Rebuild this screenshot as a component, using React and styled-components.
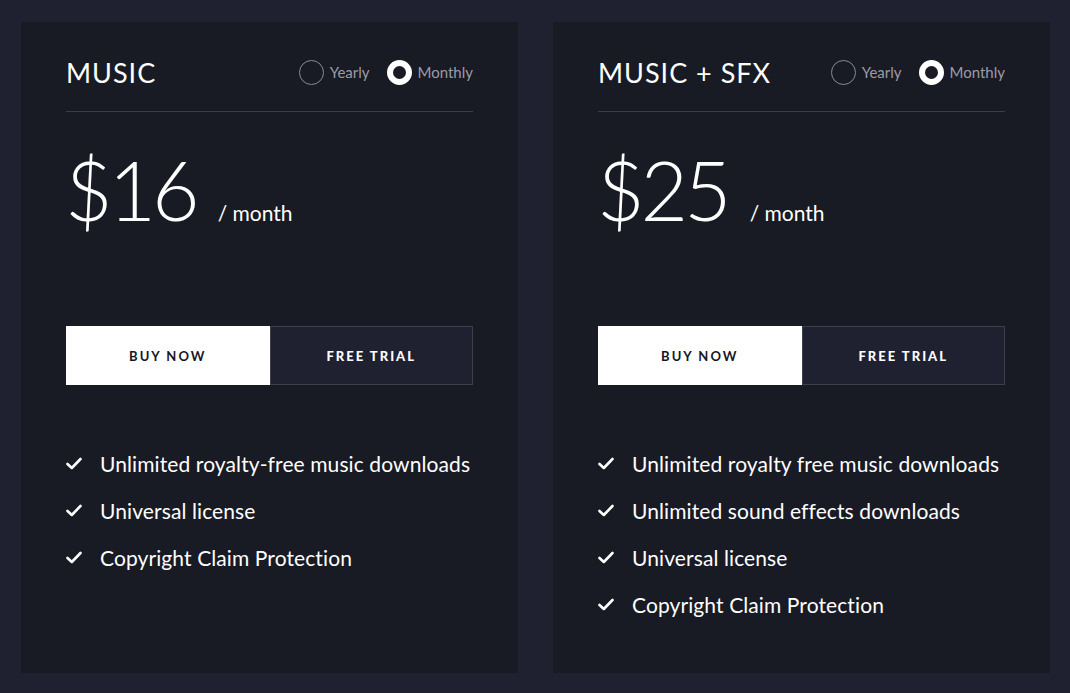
import React from "react";
import styled, { createGlobalStyle } from "styled-components";

const Global = createGlobalStyle`
  html, body { margin: 0; padding: 0; background: #1f2030; }
  body { font-family: "Lato", "Noto Sans", sans-serif; color: #fff; }
  * { box-sizing: border-box; }
`;

const Page = styled.div`
  width: 1070px;
  height: 693px;
  padding: 22px 20px 20px 21px;
  display: grid;
  grid-template-columns: 497px 497px;
  column-gap: 35px;
  background: #1f2030;
`;

const Card = styled.div`
  background: #181a24;
  padding: 0 45px;
  display: flex;
  flex-direction: column;
  height: 651px;
`;

const Header = styled.div`
  display: flex;
  align-items: center;
  justify-content: space-between;
  height: 90px;
  padding-top: 11px;
  border-bottom: 1px solid #3b3d4a;
`;

const Title = styled.h2`
  margin: 0;
  font-weight: 400;
  font-size: 27px;
  letter-spacing: 1px;
  color: #fff;
`;

const Toggle = styled.div`
  display: flex;
  align-items: center;
  gap: 17px;
`;

const Option = styled.label`
  display: flex;
  align-items: center;
  gap: 6px;
  font-size: 15px;
  color: #9c9ca8;
  font-weight: 400;
`;

const Dot = styled.span`
  width: 25px;
  height: 25px;
  border-radius: 50%;
  border: ${(p) => (p.$on ? "6px solid #fff" : "1px solid #8a8b95")};
  background: #181a24;
`;

const PriceRow = styled.div`
  display: flex;
  align-items: baseline;
  margin-top: 36px;
  height: 100px;
`;

const Amount = styled.span`
  font-size: 82px;
  font-weight: 300;
  line-height: 1;
  letter-spacing: -4px;
  color: #fff;
  margin-left: -1px;
`;

const Per = styled.span`
  font-size: 21px;
  margin-left: 22px;
  font-weight: 400;
  color: #fff;
`;

const Buttons = styled.div`
  display: grid;
  grid-template-columns: 1fr 1fr;
  margin-top: 78px;
  height: 59px;
`;

const Btn = styled.button`
  font-family: inherit;
  font-size: 13px;
  letter-spacing: 2px;
  font-weight: ${(p) => (p.$primary ? 700 : 900)};
  background: ${(p) => (p.$primary ? "#fff" : "#1f2030")};
  color: ${(p) => (p.$primary ? "#15161f" : "#fff")};
  border: ${(p) => (p.$primary ? "none" : "1px solid #3d3f4d")};
  padding: 0;
  cursor: pointer;
`;

const Features = styled.ul`
  list-style: none;
  margin: 65px 0 0;
  padding: 0;
  display: flex;
  flex-direction: column;
  gap: 20px;
`;

const Feature = styled.li`
  display: flex;
  align-items: center;
  gap: 18px;
  font-size: 21px;
  letter-spacing: 0.1px;
  line-height: 27px;
  white-space: nowrap;
  color: #fff;
`;

const Check = () => (
  <svg width="16" height="13" viewBox="0 0 16 13" fill="none">
    <path d="M1.5 7 L5.8 11 L14.5 2" stroke="#fff" strokeWidth="2.6" strokeLinecap="round" strokeLinejoin="round" />
  </svg>
);

const plans = [
  {
    title: "MUSIC",
    price: "$16",
    features: [
      "Unlimited royalty-free music downloads",
      "Universal license",
      "Copyright Claim Protection",
    ],
  },
  {
    title: "MUSIC + SFX",
    price: "$25",
    features: [
      "Unlimited royalty free music downloads",
      "Unlimited sound effects downloads",
      "Universal license",
      "Copyright Claim Protection",
    ],
  },
];

export default function App() {
  return (
    <>
      <Global />
      <Page>
        {plans.map((p) => (
          <Card key={p.title}>
            <Header>
              <Title>{p.title}</Title>
              <Toggle>
                <Option>
                  <Dot />
                  Yearly
                </Option>
                <Option>
                  <Dot $on />
                  Monthly
                </Option>
              </Toggle>
            </Header>
            <PriceRow>
              <Amount>{p.price}</Amount>
              <Per>/ month</Per>
            </PriceRow>
            <Buttons>
              <Btn $primary>BUY NOW</Btn>
              <Btn>FREE TRIAL</Btn>
            </Buttons>
            <Features>
              {p.features.map((f) => (
                <Feature key={f}>
                  <Check />
                  {f}
                </Feature>
              ))}
            </Features>
          </Card>
        ))}
      </Page>
    </>
  );
}
